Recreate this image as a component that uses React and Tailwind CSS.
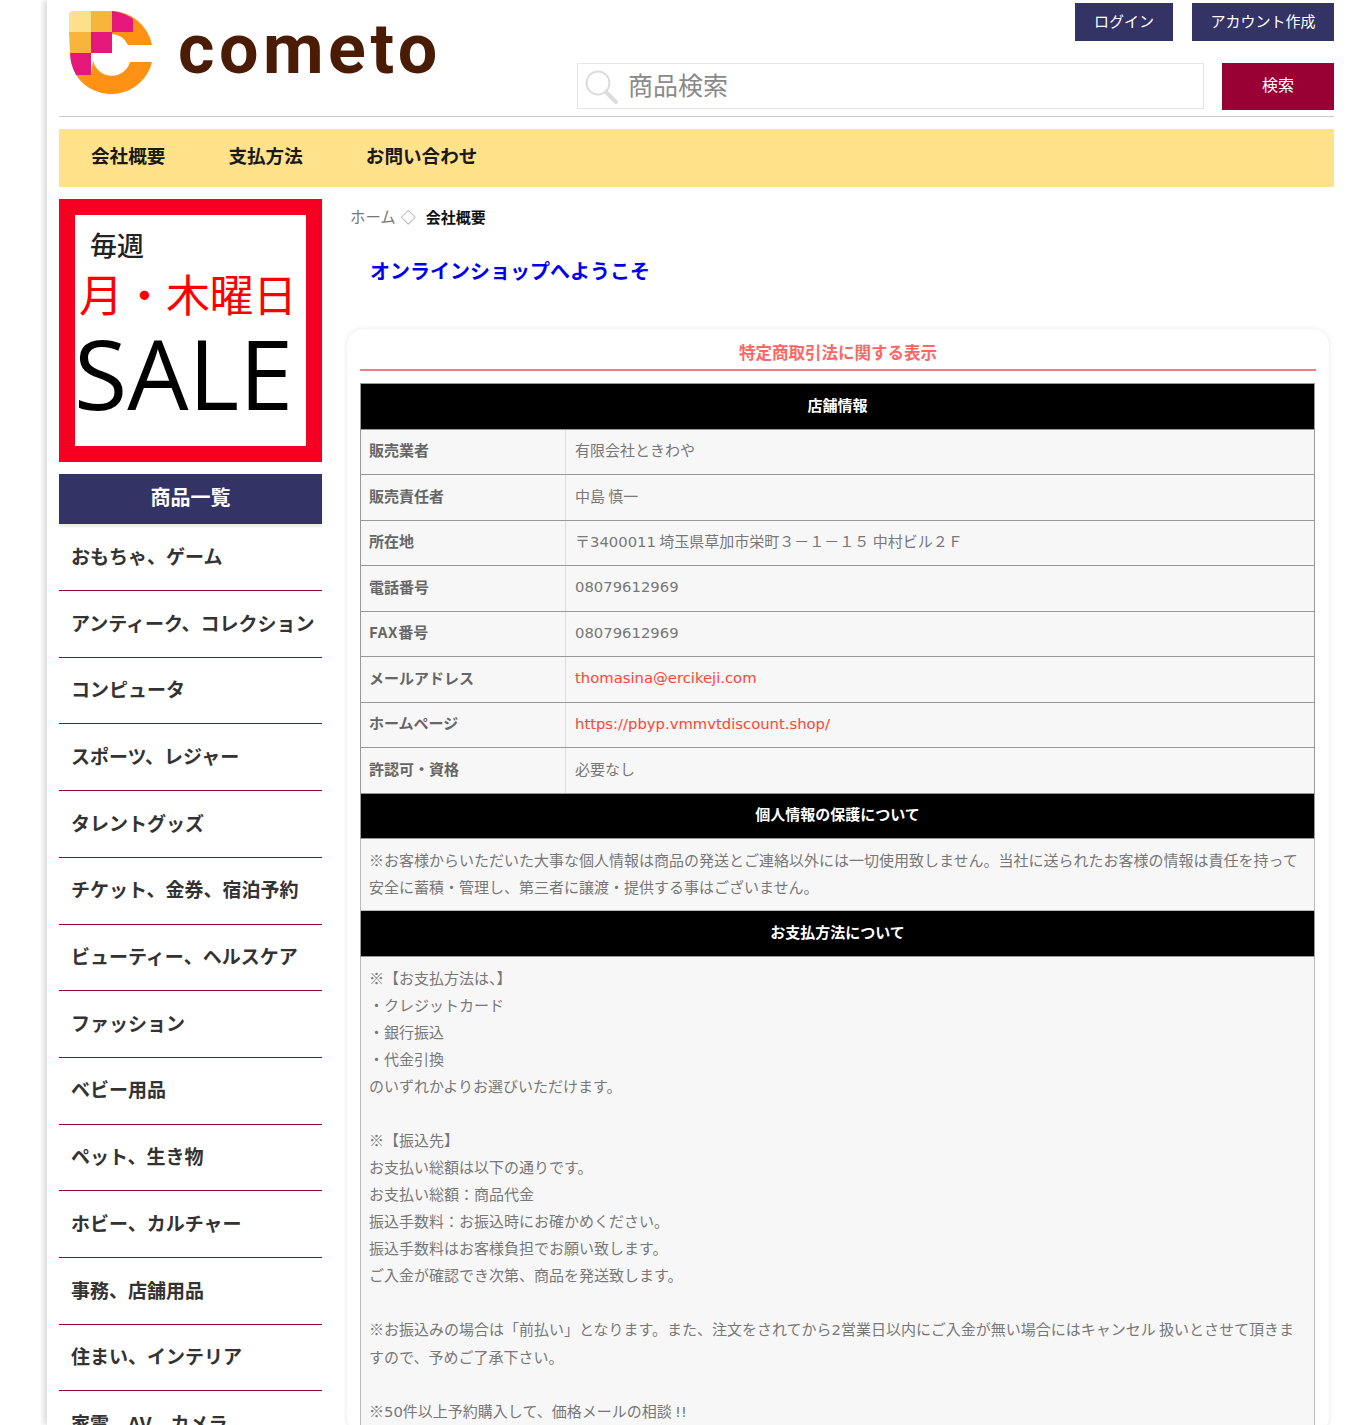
const L = ({ children }) => <span className="font-['DejaVu_Sans',sans-serif] text-[14.8px]">{children}</span>;

const cats = ["おもちゃ、ゲーム","アンティーク、コレクション","コンピュータ","スポーツ、レジャー","タレントグッズ","チケット、金券、宿泊予約","ビューティー、ヘルスケア","ファッション","ベビー用品","ペット、生き物","ホビー、カルチャー","事務、店舗用品","住まい、インテリア","家電、AV、カメラ"];
const rows = [
  ["販売業者","有限会社ときわや"],
  ["販売責任者","中島 慎一"],
  ["所在地",<>〒<L>3400011</L> 埼玉県草加市栄町３－１－１５ 中村ビル２Ｆ</>],
  ["電話番号",<L>08079612969</L>],
  [<><span className="tracking-[0.7px]">FAX</span>番号</>,<L>08079612969</L>],
  ["メールアドレス",<L>thomasina@ercikeji.com</L>,true],
  ["ホームページ",<L>https://pbyp.vmmvtdiscount.shop/</L>,true],
  ["許認可・資格","必要なし"],
];
const pay = ["※【お支払方法は、】","・クレジットカード","・銀行振込","・代金引換","のいずれかよりお選びいただけます。","","※【振込先】","お支払い総額は以下の通りです。","お支払い総額：商品代金","振込手数料：お振込時にお確かめください。","振込手数料はお客様負担でお願い致します。","ご入金が確認でき次第、商品を発送致します。","",<>※お振込みの場合は「前払い」となります。また、注文をされてから<L>2</L>営業日以内にご入金が無い場合にはキャンセル 扱いとさせて頂きますので、予めご了承下さい。</>,"",<>※<L>50</L>件以上予約購入して、価格メールの相談 <L>!!</L></>];

function Logo() {
  return (
    <svg width="84" height="84" viewBox="0 0 84 84" className="shrink-0">
      <path d="M44 1 A42 42 0 0 1 84 35 H60 A19 19 0 0 0 44 24 Z" fill="#ff9114" />
      <path d="M84 52 H62 A19 19 0 0 1 25 50 L23 65 H8 A42 42 0 0 0 84 52 Z" fill="#ff9114" />
      <path d="M3 1 H23 V22 H1 V3 Z" fill="#fee08b" />
      <path d="M23 1 H44 V22 H23 Z M1 22 H23 V43 H2 Z" fill="#f8b53c" />
      <path d="M44 1 C52 2 60 5 65 9 V22 H44 Z M23 22 H44 V43 H23 Z M2 43 H23 V65 H8 C4 58 2 50 2 43 Z" fill="#e5177b" />
    </svg>
  );
}

function Bar({ children }) {
  return <td colSpan={2} className="h-[45.5px] border border-[#999] bg-black pb-[3px] text-center text-[15px] font-bold text-white">{children}</td>;
}

export default function App() {
  return (
    <div className="h-[1425px] overflow-hidden bg-white font-['Noto_Sans_CJK_JP','Noto_Sans',sans-serif]">
      <div className="ml-[47px] h-full pl-[12px] pr-[13px] shadow-[-4px_0_5px_rgba(0,0,0,0.13)]">
        <header className="flex h-[117px] border-b border-[#ccc]">
          <div className="flex w-[518px] items-start pl-[9px] pt-[10px]">
            <Logo />
            <div className="ml-[26px] mt-[-3px] font-['Roboto',sans-serif] text-[70px] font-bold leading-[84px] tracking-[4.5px] text-[#4a1c05]">cometo</div>
          </div>
          <div className="flex-1">
            <div className="flex justify-end gap-[19px] pt-[3px]">
              <button className="flex h-[38px] w-[98px] items-center justify-center bg-[#333366] pb-[2px] text-[15px] text-white">ログイン</button>
              <button className="flex h-[38px] w-[142px] items-center justify-center bg-[#333366] pb-[2px] text-[15px] text-white">アカウント作成</button>
            </div>
            <div className="mt-[22px] flex justify-between">
              <div className="flex h-[46px] w-[627px] items-center border border-[#e5e5e5] pl-[6px]">
                <svg width="34" height="36" viewBox="0 0 34 36" fill="none" stroke="#dcdcdc" className="shrink-0">
                  <circle cx="14" cy="15" r="11.5" strokeWidth="2" />
                  <path d="M22 24 L32 34" strokeWidth="4" strokeLinecap="round" />
                </svg>
                <span className="ml-[10px] pb-[2px] text-[25px] text-[#8a8a8a]">商品検索</span>
              </div>
              <button className="flex h-[47px] w-[112px] items-center justify-center bg-[#990033] pb-[5px] text-[16px] text-white">検索</button>
            </div>
          </div>
        </header>
        <nav className="mt-[12px] flex h-[58px] items-center gap-[63px] bg-[#ffe28a] pb-[7px] pl-[32px] text-[18.6px] font-bold text-[#1a1a1a]">
          <span>会社概要</span><span>支払方法</span><span>お問い合わせ</span>
        </nav>
        <div className="mt-[12px] flex">
          <aside className="w-[263px] shrink-0">
            <div className="h-[263px] border-[16px] border-[#f50023] pl-[15px] pt-[11px]">
              <div className="text-[27px] font-medium leading-[38px] text-[#222]">毎週</div>
              <div className="ml-[-11px] mt-[3px] whitespace-nowrap text-[44px] font-normal leading-[52px] tracking-[-0.5px] text-[#ff0000]">月・木曜日</div>
              <div className="ml-[-16px] mt-[8px] font-['Open_Sans',sans-serif] text-[97px] font-medium leading-[90px] text-black">SALE</div>
            </div>
            <div className="mt-[12px] flex h-[50.4px] items-center justify-center bg-[#333366] pb-[5px] text-[20px] font-bold text-white shadow-[0_3px_2px_rgba(0,0,0,0.08)]">商品一覧</div>
            <ul>
              {cats.map((c) => (
                <li key={c} className="flex h-[66.7px] items-center whitespace-nowrap border-b border-[#990033] pb-[2px] pl-[12px] text-[19px] font-bold text-[#333]">{c}</li>
              ))}
            </ul>
          </aside>
          <main className="ml-[25px] mr-[5px] flex-1">
            <div className="flex h-[36px] items-center pl-[3px] text-[15px]">
              <span className="text-[15.4px] text-[#777]">ホーム</span>
              <span className="ml-[5px] text-[#999]">◇</span>
              <span className="ml-[10px] font-bold text-[#111]">会社概要</span>
            </div>
            <h2 className="mt-[18px] pl-[23px] text-[20px] font-bold leading-[36px] text-[#0000ee]">オンラインショップへようこそ</h2>
            <section className="mt-[40px] rounded-[16px] bg-white px-[13px] shadow-[0_0_5px_rgba(0,0,0,0.1)]">
              <h3 className="h-[42px] border-b-2 border-[#f08080] pt-[9px] text-center text-[16.5px] font-bold leading-[28px] text-[#ff6666]">特定商取引法に関する表示</h3>
              <table className="mt-[12px] w-[955px] table-fixed border-collapse text-[15px] text-[#777]">
                <colgroup><col className="w-[205px]" /><col /></colgroup>
                <tbody>
                  <tr><Bar>店舗情報</Bar></tr>
                  {rows.map(([k, v, link], i) => (
                    <tr key={i} className="h-[45.5px] bg-[#f7f7f7]">
                      <th className="border border-[#999] border-r-[#ddd] pb-[3px] pl-[8px] text-left font-bold text-[#666]">{k}</th>
                      <td className={`border border-[#999] border-l-[#ddd] pb-[3px] pl-[9px] ${link ? "text-[#ff4433]" : ""}`}>{v}</td>
                    </tr>
                  ))}
                  <tr><Bar>個人情報の保護について</Bar></tr>
                  <tr className="bg-[#f7f7f7]">
                    <td colSpan={2} className="border border-[#bbb] pb-[10px] pl-[8px] pr-[9px] pt-[7px] leading-[27px]">※お客様からいただいた大事な個人情報は商品の発送とご連絡以外には一切使用致しません。当社に送られたお客様の情報は責任を持って安全に蓄積・管理し、第三者に譲渡・提供する事はございません。</td>
                  </tr>
                  <tr><Bar>お支払方法について</Bar></tr>
                  <tr className="bg-[#f7f7f7]">
                    <td colSpan={2} className="border border-[#bbb] py-[7px] pl-[8px] pr-[9px] leading-[27px]">
                      {pay.map((l, i) => <div key={i} className="min-h-[27px]">{l}</div>)}
                    </td>
                  </tr>
                </tbody>
              </table>
            </section>
          </main>
        </div>
      </div>
    </div>
  );
}
